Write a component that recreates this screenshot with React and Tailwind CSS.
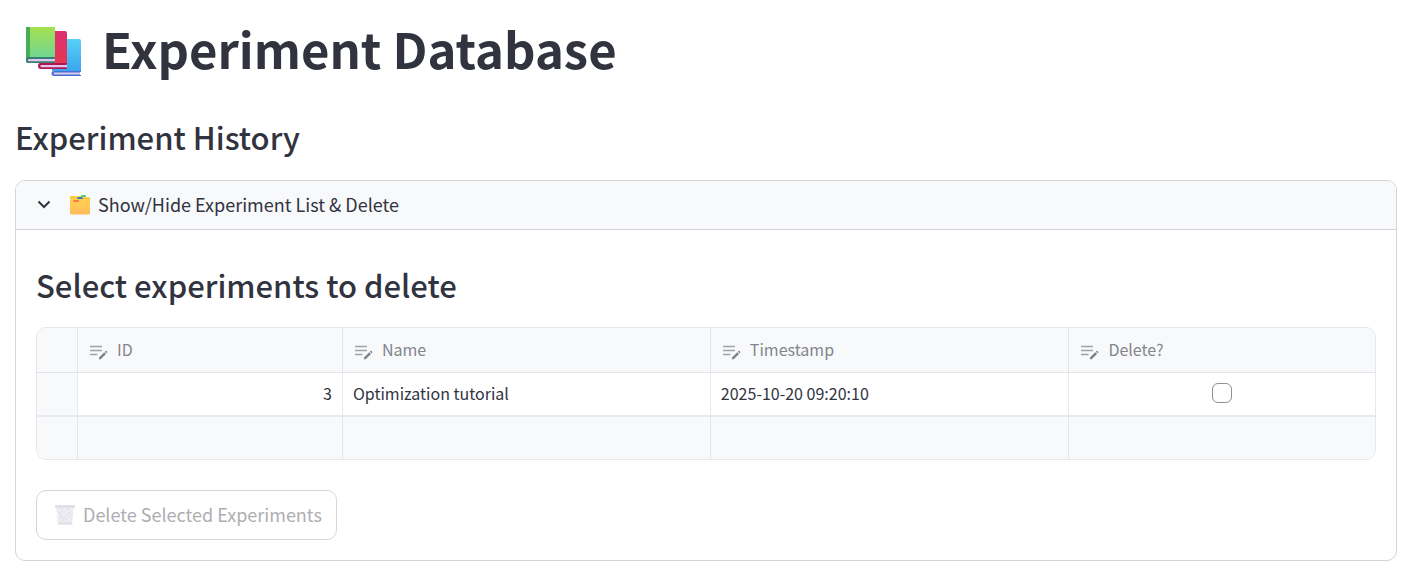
import React from "react";

function BooksIcon() {
  return (
    <svg width="56" height="50" viewBox="0 0 56 50" aria-hidden="true">
      <defs>
        <linearGradient id="bookGreen" x1="0" y1="0" x2="0" y2="1">
          <stop offset="0" stopColor="#a6e04f" />
          <stop offset="1" stopColor="#6fd694" />
        </linearGradient>
        <linearGradient id="bookRed" x1="0" y1="0" x2="0" y2="1">
          <stop offset="0" stopColor="#dc2f72" />
          <stop offset="1" stopColor="#e5384f" />
        </linearGradient>
        <linearGradient id="bookBlue" x1="0" y1="0" x2="0" y2="1">
          <stop offset="0" stopColor="#58d0f6" />
          <stop offset="1" stopColor="#3aa5ee" />
        </linearGradient>
      </defs>
      <path d="M26 14a2 2 0 0 1 2-2h25a2 2 0 0 1 2 2v30H26z" fill="url(#bookBlue)" />
      <path d="M28 44h27v1h-1v3h1v1H28a2.500 2.500 0 0 1 0-5z" fill="#4a6fd0" />
      <path d="M28.500 45.500H54v2H28.500a1 1 0 0 1 0-2z" fill="#dcc8ee" />
      <path d="M13 6a2 2 0 0 1 2-2h24a2 2 0 0 1 2 2v31H13z" fill="url(#bookRed)" />
      <path d="M15 36h26v1.500h-1v3h1V42H15a3 3 0 0 1 0-6z" fill="#b31655" />
      <path d="M15.500 38H41v2.300H15.500a1.100 1.100 0 0 1 0-2.300z" fill="#e3c4ea" />
      <path d="M0 0h29v31H0z" fill="url(#bookGreen)" />
      <path d="M0 0h4v31H0z" fill="#48ad54" />
      <path d="M2.500 30H29v1.500h-1v3h1V36H2.500a3 3 0 0 1 0-6z" fill="#397f70" />
      <path d="M3 32h26v2.300H3A1.100 1.100 0 0 1 3 32z" fill="#dcc8ee" />
    </svg>
  );
}

function DividersIcon() {
  return (
    <svg width="20" height="20" viewBox="0 0 20 20" aria-hidden="true">
      <defs>
        <linearGradient id="folder" x1="0" y1="0" x2="0" y2="1">
          <stop offset="0" stopColor="#ffd54a" />
          <stop offset="1" stopColor="#ffbb5c" />
        </linearGradient>
      </defs>
      <path d="M11 2V1a1 1 0 0 1 1-1h3a1 1 0 0 1 1 1v1z" fill="#4fce83" />
      <path d="M1 1h10v1h8a1 1 0 0 1 1 1v15a1.500 1.500 0 0 1-1.500 1.500h-17A1.500 1.500 0 0 1 0 18V2a1 1 0 0 1 1-1z" fill="url(#folder)" />
      <path d="M0 2.500h7M13 3.500h7" stroke="#eeb53c" strokeWidth="0.700" />
      <path d="M7 4l.5-1.500A1 1 0 0 1 8.500 2h3a1 1 0 0 1 1 .5L13 4z" fill="#3b78bf" />
      <path d="M3 7l.5-1.500A1 1 0 0 1 4.500 5h3.500a1 1 0 0 1 1 .7V7z" fill="#fa7552" />
    </svg>
  );
}

function WastebasketIcon() {
  return (
    <svg width="20" height="20" viewBox="0 0 20 20" fill="none" aria-hidden="true">
      <path d="M1 2h18l-1.800 17a1 1 0 0 1-1 .8H3.800a1 1 0 0 1-1-.8z" fill="#f1f0f4" />
      <path
        d="M2 6l3-3 4 5 4-5 5 5M2.500 9L5 7l4 6 5-6 3.500 4M3 13l2-2 4 6 5-6 3 4M5 18l4-5 4 5M3 6l3 5-3 5M9 3l-4 6 3 5-3 4M14 4l-4 7 3 4-2 4M17 5l-3 6 3 4-3 4"
        stroke="#e2e0e9"
        strokeWidth="0.800"
      />
      <path d="M3 18.500h14" stroke="#e0dee7" strokeWidth="2" />
      <rect width="20" height="3" rx="1.200" fill="#e0dee8" />
    </svg>
  );
}

function EditableIcon() {
  return (
    <svg width="18" height="16" viewBox="0 0 18 16" aria-hidden="true" className="shrink-0">
      <path d="M0 1.500h12M0 5.500h12M0 9.500h7.500" stroke="#a0a2a9" strokeWidth="1.500" />
      <path d="M9 12.600l5.300-5.300 1.700 1.700-5.300 5.300H9zM14.900 6.700l.8-.8a.5.5 0 0 1 .7 0l.9.9a.5.5 0 0 1 0 .7l-.8.8z" fill="#7d808a" />
    </svg>
  );
}

const columns = ["ID", "Name", "Timestamp", "Delete?"];

export default function App() {
  return (
    <main className="bg-white pt-4 pr-[14px] pb-4 pl-[15px] font-['Noto_Sans_CJK_SC','Noto_Sans',sans-serif] text-[#31333f]">
      <h1 className="flex items-center gap-5 pl-[11px] text-[49px] leading-[64px] font-bold">
        <BooksIcon />
        <span className="pb-2">Experiment Database</span>
      </h1>
      <h2 className="mt-7 text-[31px] leading-[42px] font-medium">Experiment History</h2>

      <section className="mt-[22px] overflow-hidden rounded-[10px] border border-[#d3d4d8]">
        <button
          type="button"
          aria-expanded="true"
          className="flex h-12 w-full items-center bg-[#f8f9fb] pl-[21px] text-left text-[18px] leading-6"
        >
          <svg width="14" height="14" viewBox="0 0 14 14" fill="none" aria-hidden="true">
            <path d="M1.500 3.500L7 9l5.500-5.500" stroke="#31333f" strokeWidth="2" />
          </svg>
          <span className="ml-[19px] flex items-center gap-2">
            <DividersIcon />
            <span className="pb-[3px]">Show/Hide Experiment List &amp; Delete</span>
          </span>
        </button>

        <div className="border-t border-[#d3d4d8] px-5 pt-[34px] pb-5">
          <h2 className="text-[31px] leading-[42px] font-medium">Select experiments to delete</h2>

          <div className="mt-[21px] overflow-hidden rounded-[10px] border border-[#e6e7ea]">
            <table className="w-full table-fixed border-separate border-spacing-0 text-[16px] leading-5">
              <colgroup>
                <col className="w-[41px]" />
                <col className="w-[19.8%]" />
                <col className="w-[27.5%]" />
                <col className="w-[26.8%]" />
                <col />
              </colgroup>
              <thead>
                <tr className="h-[45px] bg-[#f8f9fb] text-[#83858c]">
                  <td className="border-r border-b border-[#e3e4e8]" />
                  {columns.map((name) => (
                    <th
                      key={name}
                      scope="col"
                      className="border-r border-b border-[#e3e4e8] p-0 pl-3 text-left font-normal last:border-r-0"
                    >
                      <span className="flex items-end gap-[9px]">
                        <EditableIcon />
                        <span className="pb-0.5">{name}</span>
                      </span>
                    </th>
                  ))}
                </tr>
              </thead>
              <tbody>
                <tr className="h-[44px]">
                  <td className="border-r border-b-2 border-[#e8e9ec] bg-[#f8f9fb]" />
                  <td className="border-r border-b-2 border-[#e8e9ec] p-0 pr-[10px] pb-0.5 text-right">3</td>
                  <td className="border-r border-b-2 border-[#e8e9ec] p-0 pb-0.5 pl-[10px]">Optimization tutorial</td>
                  <td className="border-r border-b-2 border-[#e8e9ec] p-0 pb-0.5 pl-[10px]">2025-10-20 09:20:10</td>
                  <td className="border-b-2 border-[#e8e9ec] p-0 pb-0.5 text-center">
                    <input
                      type="checkbox"
                      aria-label="Delete Optimization tutorial"
                      className="mx-auto block size-5 appearance-none rounded-[6px] border border-[#8f9098] bg-white checked:bg-[#ff4b4b]"
                    />
                  </td>
                </tr>
                <tr className="h-[42px] bg-[#f8f9fb]">
                  <td className="border-r border-[#e3e4e8]" />
                  <td className="border-r border-[#e3e4e8]" />
                  <td className="border-r border-[#e3e4e8]" />
                  <td className="border-r border-[#e3e4e8]" />
                  <td />
                </tr>
              </tbody>
            </table>
          </div>

          <button
            type="button"
            disabled
            className="mt-[30px] flex h-[50px] items-center gap-2 rounded-[10px] border border-[#d6d6d9] pr-[14px] pl-[18px] text-[18px] leading-6 text-[#adaeb2]"
          >
            <WastebasketIcon />
            <span className="pb-[3px]">Delete Selected Experiments</span>
          </button>
        </div>
      </section>
    </main>
  );
}
